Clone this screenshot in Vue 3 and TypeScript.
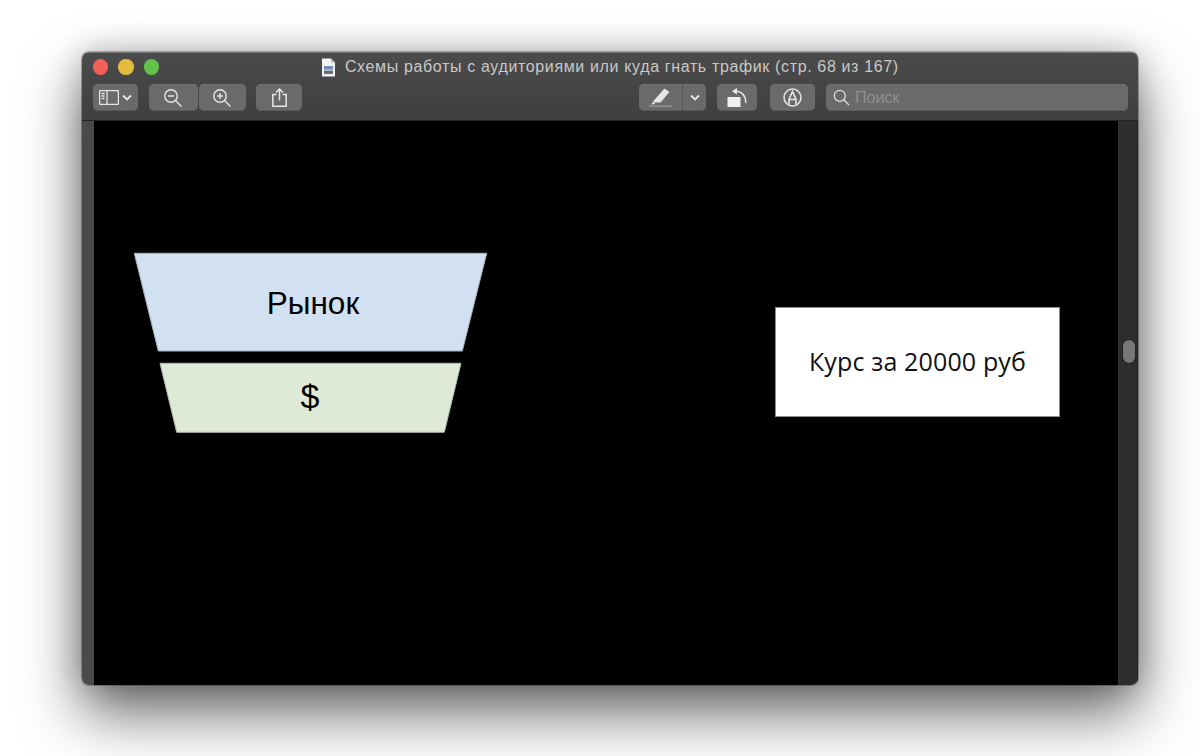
<script setup lang="ts">
const title = 'Схемы работы с аудиториями или куда гнать трафик (стр. 68 из 167)'
</script>

<template>
  <main class="page">
    <section class="window">
      <header class="chrome">
        <div class="titlebar">
          <div class="lights">
            <span class="light red"></span>
            <span class="light yellow"></span>
            <span class="light green"></span>
          </div>
          <svg class="doc" width="15" height="19" viewBox="0 0 15 19">
            <path d="M1 .5h9l4 4v14H1z" fill="#f2f2f2" />
            <path d="M10 .5v4h4z" fill="#bdbdbd" />
            <rect x="3" y="8" width="9" height="3" fill="#6f90bd" />
            <rect x="3" y="11" width="9" height="2" fill="#a3b4c8" />
            <rect x="3" y="13" width="9" height="3" fill="#666f79" />
          </svg>
          <span class="title">{{ title }}</span>
        </div>
        <div class="tools">
          <button class="btn sidebar">
            <svg width="20" height="15" viewBox="0 0 20 15" fill="none" stroke="#e6e6e6" stroke-width="1.3">
              <rect x=".6" y=".6" width="18.8" height="13.8" rx="1" />
              <path d="M8 .6v13.8" />
              <path d="M2.500 3.500h3M2.500 6h3M2.500 8.500h3" />
            </svg>
            <svg width="10" height="7" viewBox="0 0 10 7" fill="none" stroke="#e6e6e6" stroke-width="1.8">
              <path d="M1 1.500l4 4 4-4" />
            </svg>
          </button>
          <div class="pair">
            <button class="btn zoom-out">
              <svg width="19" height="18" viewBox="0 0 19 18" fill="none" stroke="#e6e6e6" stroke-width="1.4">
                <circle cx="7" cy="7" r="6.200" />
                <path d="M11.500 11.500l6 6M4 7h6" />
              </svg>
            </button>
            <button class="btn zoom-in">
              <svg width="19" height="18" viewBox="0 0 19 18" fill="none" stroke="#e6e6e6" stroke-width="1.4">
                <circle cx="7" cy="7" r="6.200" />
                <path d="M11.500 11.500l6 6M4 7h6M7 4v6" />
              </svg>
            </button>
          </div>
          <button class="btn share">
            <svg width="15" height="19" viewBox="0 0 15 19" fill="none" stroke="#e6e6e6" stroke-width="1.5">
              <path d="M4.500 6.500H.8v11.700h13.400V6.500H10.500" />
              <path d="M7.500 12.500V1.200M4 4.500L7.500 1 11 4.500" />
            </svg>
          </button>
          <div class="spacer"></div>
          <div class="btn pen">
            <span class="pen-main">
              <svg width="24" height="21" viewBox="0 0 24 21">
                <path d="M4 14.500L15.500 1.500l5 3.500-9 10.500H5z" fill="#e6e6e6" />
                <path d="M4 15l-1.500 2.500 4-.5z" fill="#e6e6e6" />
                <rect x="0" y="18.500" width="23" height="1.300" fill="#9a9a9a" />
              </svg>
            </span>
            <span class="pen-more">
              <svg width="10" height="7" viewBox="0 0 10 7" fill="none" stroke="#e6e6e6" stroke-width="1.8">
                <path d="M1 1.500l4 4 4-4" />
              </svg>
            </span>
          </div>
          <button class="btn rotate">
            <svg width="20" height="20" viewBox="0 0 20 20">
              <rect x="0.500" y="9" width="13" height="10" fill="#f0f0f0" />
              <path d="M18.800 15C18.800 8 15 3.200 9 3.200" fill="none" stroke="#e6e6e6" stroke-width="1.500" />
              <path d="M10 -.2v7L5 3.200z" fill="#e6e6e6" />
            </svg>
          </button>
          <button class="btn annotate">
            <svg width="19" height="19" viewBox="0 0 19 19" fill="none" stroke="#e6e6e6" stroke-width="1.500">
              <circle cx="9.500" cy="9.500" r="8.500" />
              <path d="M6 16.500V11.500l3.500-8 3.500 8v5M6.300 11.500h6.400" stroke-width="1.600" />
            </svg>
          </button>
          <div class="search">
            <svg width="17" height="17" viewBox="0 0 17 17" fill="none" stroke="#dedede" stroke-width="1.300">
              <circle cx="6.800" cy="6.800" r="5.500" />
              <path d="M10.800 10.800l5.200 5.200" />
            </svg>
            <span class="placeholder">Поиск</span>
          </div>
        </div>
      </header>
      <div class="body">
        <div class="gutter-left"></div>
        <div class="canvas">
          <svg class="shapes" width="1024" height="563" viewBox="0 0 1024 563">
            <polygon points="40.300,132.300 392.700,132.300 368.300,230 64.300,230" fill="#d2e1f1" stroke="#a9b4bf" />
            <text x="219" y="193" class="funnel-text">Рынок</text>
            <polygon points="66,242.300 367,242.300 350.300,311.300 82.700,311.300" fill="#dee9d8" stroke="#b0b9aa" />
            <text x="216" y="287" class="funnel-text dollar">$</text>
          </svg>
          <div class="course">Курс за 20000 руб</div>
        </div>
        <div class="gutter-right">
          <span class="thumb"></span>
        </div>
      </div>
    </section>
  </main>
</template>

<style>
html, body { margin: 0; background: #fff; }
</style>

<style scoped>
.page {
  width: 1200px;
  height: 756px;
  box-sizing: border-box;
  padding: 52px 62px 0 82px;
  overflow: hidden;
  background: #fff;
  font-family: "Liberation Sans", Arial, sans-serif;
}
.window {
  width: 1056px;
  height: 633px;
  display: flex;
  flex-direction: column;
  border-radius: 7px;
  overflow: hidden;
  box-shadow: 0 28px 60px rgba(0, 0, 0, 0.6), 0 0 30px rgba(0, 0, 0, 0.22), 0 0 0 1px rgba(0, 0, 0, 0.25);
}
.chrome {
  height: 69px;
  flex: none;
  box-sizing: border-box;
  background: linear-gradient(#4b4b4b, #3f3f3f);
  border-top: 1px solid #777;
  border-bottom: 1px solid #232323;
}
.titlebar {
  height: 28px;
  display: flex;
  align-items: center;
  box-sizing: border-box;
}
.lights {
  display: flex;
  gap: 10px;
  padding-left: 11px;
}
.light {
  width: 15.3px;
  height: 15.3px;
  border-radius: 50%;
}
.red { background: #f25f58; }
.yellow { background: #e3bc40; }
.green { background: #63c24a; }
.doc { margin-left: 162px; }
.title {
  margin-left: 9px;
  color: #c8c8c8;
  font-family: "Liberation Sans", Arial, sans-serif;
  font-size: 16px;
  letter-spacing: 0.64px;
  white-space: nowrap;
}
.tools {
  display: flex;
  align-items: center;
  height: 27px;
  margin-top: 3px;
  padding: 0 10px 0 11px;
}
.btn {
  height: 27px;
  box-sizing: border-box;
  display: flex;
  align-items: center;
  justify-content: center;
  padding: 0;
  border: 0;
  border-radius: 5px;
  background: #6a6a6a;
  box-shadow: inset 0 -1px 0 #5c5c5c, inset 0 1px 0 #737373;
}
.sidebar { width: 45px; gap: 3px; margin-right: 11px; padding-right: 1px; }
.pair { display: flex; gap: 1px; margin-right: 10px; }
.zoom-out { width: 49px; padding-right: 1px; }
.zoom-in { width: 47px; padding-right: 1px; }
.share { width: 46px; }
.spacer { flex: 1; }
.pen { width: 67px; margin-right: 11px; justify-content: flex-start; }
.pen-main {
  width: 43px;
  height: 27px;
  display: flex;
  align-items: center;
  justify-content: center;
  border-right: 1px solid #565656;
}
.pen-more {
  flex: 1;
  display: flex;
  align-items: center;
  justify-content: center;
}
.rotate { width: 40px; margin-right: 13px; }
.annotate { width: 45px; margin-right: 11px; }
.search {
  width: 302px;
  height: 27px;
  display: flex;
  align-items: center;
  gap: 5px;
  box-sizing: border-box;
  padding-left: 7px;
  border-radius: 5px;
  background: #6a6a6a;
  box-shadow: inset 0 -1px 0 #5c5c5c, inset 0 1px 0 #737373;
}
.placeholder {
  color: #8f8f8f;
  font-size: 16px;
}
.body {
  flex: 1;
  display: flex;
  min-height: 0;
}
.gutter-left {
  width: 12px;
  flex: none;
  background: #4a4a4a;
}
.canvas {
  flex: 1;
  position: relative;
  background: #000;
}
.shapes {
  position: absolute;
  left: 0;
  top: 0;
}
.funnel-text {
  fill: #000;
  font-family: "Liberation Sans", Arial, sans-serif;
  font-size: 31.5px;
  text-anchor: middle;
}
.dollar { font-size: 34px; }
.course {
  position: absolute;
  left: 681px;
  top: 186px;
  width: 285px;
  height: 110px;
  box-sizing: border-box;
  display: flex;
  align-items: center;
  justify-content: center;
  padding-bottom: 2px;
  background: #fff;
  border: 1px solid #8c8c8c;
  color: #111;
  font-family: "Open Sans", "DejaVu Sans", sans-serif;
  font-size: 25px;
  letter-spacing: 0.14px;
  white-space: nowrap;
}
.gutter-right {
  width: 20px;
  flex: none;
  box-sizing: border-box;
  position: relative;
  background: #2d2d2d;
  border-left: 1px solid #343434;
  border-right: 1px solid #222;
}
.thumb {
  position: absolute;
  left: 4px;
  top: 219px;
  width: 12px;
  height: 23px;
  border-radius: 6px;
  background: #777;
  box-shadow: 0 0 0 1px #222;
}
</style>
